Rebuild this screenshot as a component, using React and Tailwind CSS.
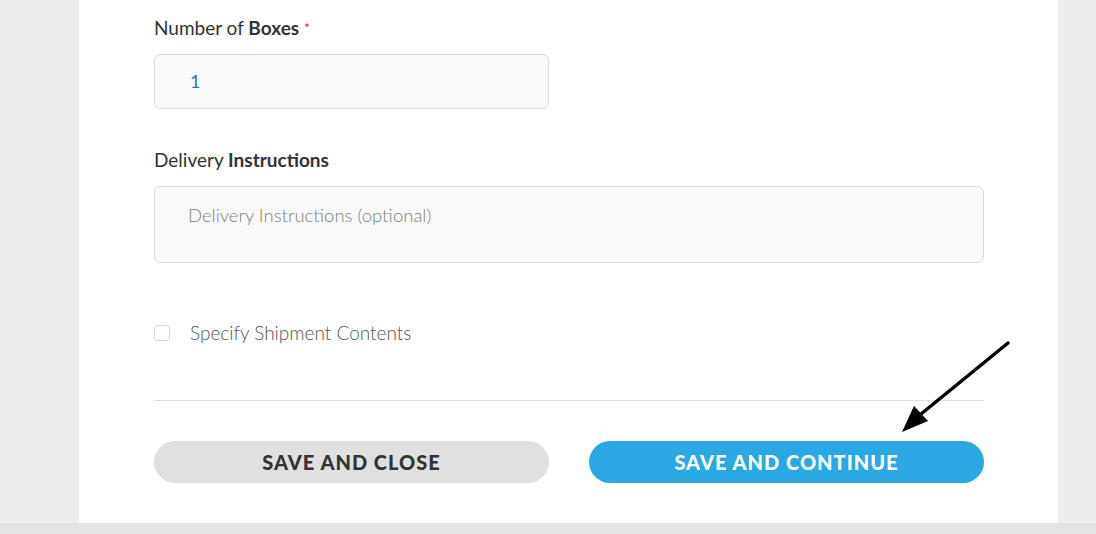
export default function App() {
  const font = { fontFamily: "Lato, 'Open Sans', sans-serif" };
  return (
    <div className="min-h-[534px] bg-[#ededed] flex flex-col" style={font}>
      <div className="flex-1 flex">
        <div className="ml-[79px] w-[979px] h-[523px] bg-white relative pl-[75px] pr-[74px] pt-[16px]">
          <label className="block text-[19px] leading-[24px] text-[#333]">
            Number of <span className="font-bold">Boxes</span>{' '}
            <span className="text-[#e0263a] text-[14px] align-top">*</span>
          </label>
          <div className="mt-[14px] w-[395px] h-[55px] rounded-[6px] border border-[#dcdcdc] bg-[#f9f9f9] flex items-center pl-[35px] text-[18px] text-[#2a7ab8]">
            1
          </div>

          <label className="block mt-[39px] text-[19px] leading-[24px] text-[#333]">
            Delivery <span className="font-bold">Instructions</span>
          </label>
          <div className="mt-[14px] h-[77px] rounded-[6px] border border-[#dcdcdc] bg-[#f9f9f9] pl-[33px] pt-[16px] text-[18.5px] leading-[24px] text-[#808080] font-light">
            Delivery Instructions (optional)
          </div>

          <div className="mt-[58px] flex items-center h-[24px]">
            <span className="w-[16px] h-[16px] rounded-[3px] border border-[#d8d8d8] bg-white"></span>
            <span className="ml-[20px] text-[19px] text-[#555] font-light">Specify Shipment Contents</span>
          </div>

          <div className="mt-[55px] border-t border-[#e0e0e0]"></div>

          <div className="mt-[40px] flex gap-[40px]">
            <button className="w-[395px] h-[42px] rounded-full bg-[#e0e0e0] text-[#333] text-[20px] font-black tracking-[1px]">
              SAVE AND CLOSE
            </button>
            <button className="w-[395px] h-[42px] rounded-full bg-[#29a8e4] text-white text-[20px] font-black tracking-[1px]">
              SAVE AND CONTINUE
            </button>
          </div>

          <svg className="absolute left-[815px] top-[335px]" width="120" height="105" viewBox="0 0 120 105">
            <line x1="114" y1="8" x2="16" y2="88" stroke="#000" strokeWidth="3.5" strokeLinecap="round" />
            <polygon points="8,97 20,71 34,86" fill="#000" />
          </svg>
        </div>
      </div>
      <div className="h-[11px] bg-[#e3e3e3]"></div>
    </div>
  );
}
